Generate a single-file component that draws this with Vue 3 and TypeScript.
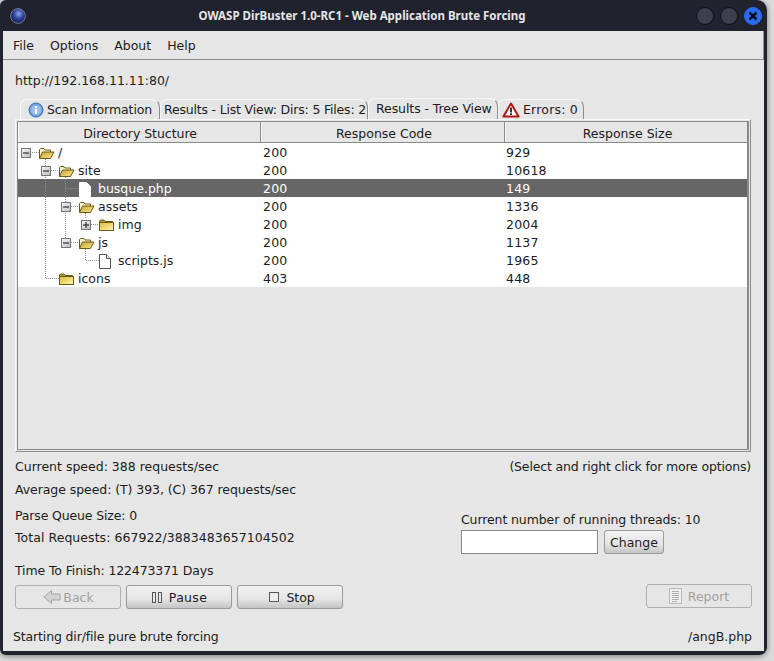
<script setup lang="ts">
interface Row {
  name: string
  code: number
  size: number
  indent: number
  kind: 'open' | 'closed' | 'file'
  toggle?: '+' | '-'
  selected?: boolean
}

const menus: string[] = ['File', 'Options', 'About', 'Help']

const rows: Row[] = [
  { name: '/', code: 200, size: 929, indent: 0, kind: 'open', toggle: '-' },
  { name: 'site', code: 200, size: 10618, indent: 1, kind: 'open', toggle: '-' },
  { name: 'busque.php', code: 200, size: 149, indent: 2, kind: 'file', selected: true },
  { name: 'assets', code: 200, size: 1336, indent: 2, kind: 'open', toggle: '-' },
  { name: 'img', code: 200, size: 2004, indent: 3, kind: 'closed', toggle: '+' },
  { name: 'js', code: 200, size: 1137, indent: 2, kind: 'open', toggle: '-' },
  { name: 'scripts.js', code: 200, size: 1965, indent: 3, kind: 'file' },
  { name: 'icons', code: 403, size: 448, indent: 1, kind: 'closed' },
]
</script>

<template>
  <div class="desktop">
    <div class="window">
      <header class="titlebar">
        <svg class="app-icon" width="16" height="16" viewBox="0 0 16 16">
          <defs>
            <radialGradient id="orb" cx="0.55" cy="0.35" r="0.7">
              <stop offset="0" stop-color="#8fa4e8" />
              <stop offset="0.5" stop-color="#2c3f9c" />
              <stop offset="1" stop-color="#101a4c" />
            </radialGradient>
            <linearGradient id="front" x1="0" y1="0" x2="1" y2="1">
              <stop offset="0" stop-color="#c9a52e" />
              <stop offset="1" stop-color="#f6e68f" />
            </linearGradient>
            <linearGradient id="closed" x1="0" y1="0" x2="1" y2="1">
              <stop offset="0" stop-color="#d9b93d" />
              <stop offset="0.6" stop-color="#f2df7c" />
              <stop offset="1" stop-color="#fbf4c4" />
            </linearGradient>
            <linearGradient id="toggle" x1="0" y1="0" x2="1" y2="1">
              <stop offset="0" stop-color="#fafafa" />
              <stop offset="1" stop-color="#b9b9b9" />
            </linearGradient>
          </defs>
          <circle cx="8" cy="8" r="7.4" fill="url(#orb)" stroke="#8a8f98" stroke-width="0.8" />
        </svg>
        <div class="title">OWASP DirBuster 1.0-RC1 - Web Application Brute Forcing</div>
        <div class="win-buttons">
          <span class="win-btn"></span>
          <span class="win-btn"></span>
          <span class="win-btn close">
            <svg width="10" height="10" viewBox="0 0 10 10">
              <path d="M1.5 1.5 8.5 8.5M8.5 1.5 1.5 8.5" stroke="#0a0f1e" stroke-width="2.6" />
            </svg>
          </span>
        </div>
      </header>

      <div class="client">
        <nav class="menubar">
          <span v-for="m in menus" :key="m" class="menu">{{ m }}</span>
        </nav>

        <div class="url">http://192.168.11.11:80/</div>

        <div class="tabs">
          <div class="tab t1">
            <svg width="16" height="16" viewBox="0 0 16 16">
              <circle cx="8" cy="8" r="7" fill="#6f9fdc" stroke="#3d6cb0" />
              <circle cx="8" cy="8" r="5" fill="#9cc0ea" />
              <rect x="7" y="7" width="2" height="5" fill="#fff" />
              <rect x="7" y="4" width="2" height="2" fill="#fff" />
            </svg>
            <span>Scan Information</span>
          </div>
          <div class="tab t2"><span>Results - List View: Dirs: 5 Files: 2</span></div>
          <div class="tab t3 active"><span>Results - Tree View</span></div>
          <div class="tab t4">
            <svg width="18" height="16" viewBox="0 0 18 16">
              <path d="M9 1.5 16.6 14.5H1.4Z" fill="#fff" stroke="#b01515" stroke-width="2" stroke-linejoin="round" />
              <rect x="8.1" y="5.5" width="1.8" height="5" fill="#222" />
              <rect x="8.1" y="11.2" width="1.8" height="1.8" fill="#222" />
            </svg>
            <span>Errors: 0</span>
          </div>
        </div>

        <section class="panel">
          <div class="table">
            <div class="thead">
              <div class="th first">Directory Stucture</div>
              <div class="th shifted">Response Code</div>
              <div class="th shifted last">Response Size</div>
            </div>
            <div class="tbody">
              <svg class="guides" width="130" height="144" viewBox="0 0 130 144">
                <g stroke="#8c8c8c" stroke-dasharray="1 1" fill="none">
                  <path d="M8 9.5H21" />
                  <path d="M27.5 14V135.5H41" />
                  <path d="M33 27.5H41" />
                  <path d="M47.5 32V99" />
                  <path d="M47.5 45.5H62" />
                  <path d="M53 63.5H61" />
                  <path d="M53 99.5H61" />
                  <path d="M67.5 68V76" />
                  <path d="M73 81.5H81" />
                  <path d="M67.5 104V117.5H81" />
                </g>
              </svg>
              <div v-for="r in rows" :key="r.name" class="tr" :class="{ selected: r.selected }">
                <div class="td tree" :class="'lvl' + r.indent">
                  <span class="toggle" :class="{ hidden: !r.toggle }">
                    <svg width="10" height="10" viewBox="0 0 10 10">
                      <rect x="0.5" y="0.5" width="9" height="9" fill="url(#toggle)" stroke="#777" />
                      <path v-if="r.toggle" d="M2 5H8" stroke="#111" />
                      <path v-if="r.toggle === '+'" d="M5 2V8" stroke="#111" />
                    </svg>
                  </span>
                  <span class="node" :class="r.kind">
                    <svg v-if="r.kind === 'open'" width="17" height="13" viewBox="0 0 17 13">
                      <path d="M1.5 11.5V2.5L2.5 1.5H6L7 3H12.5V5" fill="#fbf5cf" stroke="#6b5a17" />
                      <path d="M1.5 11.5 4.5 5H16L12.5 11.5Z" fill="url(#front)" stroke="#6b5a17" />
                    </svg>
                    <svg v-else-if="r.kind === 'closed'" width="17" height="13" viewBox="0 0 17 13">
                      <path d="M1.5 3V2L2.5 1H6L7 2.5H14.5V3.5H1.5Z" fill="#b9982a" stroke="#6b5a17" />
                      <rect x="1.5" y="3.5" width="14" height="8" fill="url(#closed)" stroke="#6b5a17" />
                    </svg>
                    <svg v-else width="12" height="15" viewBox="0 0 12 15">
                      <path d="M0.5 0.5H7.5L11.5 4.5V14.5H0.5Z" fill="#fff" stroke="#555" />
                      <path d="M7.5 0.5V4.5H11.5" fill="#eee" stroke="#555" />
                    </svg>
                  </span>
                  <span class="name">{{ r.name }}</span>
                </div>
                <div class="td num code">{{ r.code }}</div>
                <div class="td num size">{{ r.size }}</div>
              </div>
            </div>
          </div>
        </section>

        <div class="speed-row">
          <span>Current speed: 388 requests/sec</span>
          <span class="hint">(Select and right click for more options)</span>
        </div>
        <div class="avg">Average speed: (T) 393, (C) 367 requests/sec</div>

        <div class="info-grid">
          <div class="left-info">
            <div class="parse">Parse Queue Size: 0</div>
            <div class="total">Total Requests: 667922/3883483657104502</div>
            <div class="finish">Time To Finish: 122473371 Days</div>
          </div>
          <div class="threads">
            <div class="thread-label">Current number of running threads: 10</div>
            <div class="thread-ctrl">
              <input class="thread-input" type="text" />
              <button class="btn change">Change</button>
            </div>
          </div>
        </div>

        <div class="actions">
          <button class="btn act disabled back">
            <svg width="18" height="16" viewBox="0 0 18 16">
              <path d="M1 8 8.5 1.5V5H17V11H8.5V14.5Z" fill="#d4d4d4" stroke="#a2a2a2" />
            </svg>
            <span>Back</span>
          </button>
          <button class="btn act">
            <svg width="12" height="13" viewBox="0 0 12 13">
              <rect x="1.5" y="1.5" width="3" height="10" fill="#e9e9e9" stroke="#555" />
              <rect x="7.5" y="1.5" width="3" height="10" fill="#e9e9e9" stroke="#555" />
            </svg>
            <span class="wide">Pause</span>
          </button>
          <button class="btn act stop">
            <svg width="12" height="12" viewBox="0 0 12 12">
              <rect x="1.5" y="1.5" width="9" height="9" fill="#ececec" stroke="#555" />
            </svg>
            <span>Stop</span>
          </button>
          <button class="btn act disabled report">
            <svg width="13" height="16" viewBox="0 0 13 16">
              <rect x="0.5" y="0.5" width="12" height="15" fill="#efefef" stroke="#b8b8b8" />
              <path d="M3 3.5H10M3 5.5H10M3 7.5H10M3 9.5H10M3 11.5H10M3 13.5H8" stroke="#b0b0b0" />
            </svg>
            <span>Report</span>
          </button>
        </div>

        <footer class="status">
          <span class="status-left">Starting dir/file pure brute forcing</span>
          <span>/angB.php</span>
        </footer>
      </div>
    </div>
  </div>
</template>

<style>
html, body { margin: 0; background: #d8d8d8; }
</style>

<style scoped>
.desktop {
  width: 774px;
  height: 661px;
  overflow: hidden;
  background: #dcdcdc;
  font-family: "DejaVu Sans", sans-serif;
  font-size: 12.5px;
  color: #1c1c1c;
}
.window {
  width: 767px;
  height: 655px;
  background: #20232e;
  border-radius: 6px 10px 8px 6px;
  box-sizing: border-box;
  padding: 0 3px 4px;
  display: flex;
  flex-direction: column;
  box-shadow: 0 1px 6px rgba(0, 0, 0, 0.45);
}
.titlebar {
  height: 31px;
  flex: none;
  display: flex;
  align-items: center;
  position: relative;
}
.app-icon { margin-left: 7px; margin-top: 1px; }
.title {
  position: absolute;
  left: 0;
  right: 0;
  top: 7px;
  text-align: center;
  font-family: "Noto Sans", sans-serif;
  font-weight: 700;
  font-size: 11.5px;
  line-height: 17px;
  color: #e6e6e6;
  padding-right: 43px;
}
.win-buttons {
  position: absolute;
  right: 2px;
  top: 7px;
  display: flex;
  gap: 6px;
}
.win-btn {
  width: 18px;
  height: 18px;
  border-radius: 50%;
  background: #3b3f4e;
  box-sizing: border-box;
  border: 1px solid #0e1016;
  display: flex;
  align-items: center;
  justify-content: center;
}
.win-btn.close { background: #2a6cf0; border-color: #2a6cf0; }
.client {
  flex: 1;
  width: 761px;
  background: #e6e6e6;
  display: flex;
  flex-direction: column;
  box-sizing: border-box;
  min-height: 0;
}
.menubar {
  height: 29px;
  flex: none;
  box-sizing: border-box;
  border-bottom: 1px solid #8d8d8d;
  border-right: 1px solid #8d8d8d;
  display: flex;
  align-items: center;
  padding: 1px 0 0 10px;
  gap: 16px;
}
.url { margin: 12px 0 0 12px; line-height: 18px; }
.tabs {
  display: flex;
  margin: 9px 0 0 14px;
  height: 20px;
  flex: none;
  align-items: flex-end;
}
.tab {
  height: 20px;
  box-sizing: border-box;
  display: flex;
  align-items: center;
  gap: 3px;
  line-height: 18px;
  white-space: nowrap;
  border-top: 1px solid #f6f6f6;
  border-left: 1px solid #f6f6f6;
  border-right: 1px solid #8e8e8e;
  border-radius: 7px 8px 0 0;
}
.t1 { width: 140px; padding-left: 7px; margin-left: 3px; letter-spacing: -0.1px; }
.t2 { width: 208px; padding-left: 3px; letter-spacing: -0.19px; }
.t3 { width: 130px; padding-left: 7px; height: 21px; padding-bottom: 1px; letter-spacing: -0.08px; }
.t4 { width: 86px; padding-left: 3px; letter-spacing: 0.2px; }
.panel {
  margin: 0 0 0 12px;
  width: 736px;
  height: 333px;
  box-sizing: border-box;
  border-top: 1px solid #f8f8f8;
  border-left: 1px solid #f8f8f8;
  border-right: 1px solid #8e8e8e;
  border-bottom: 1px solid #8e8e8e;
  padding: 1px;
  flex: none;
}
.table {
  height: 100%;
  box-sizing: border-box;
  border: 1px solid #8a8a8a;
  border-right: 2px solid #8a8a8a;
  background: #e6e6e6;
}
.thead {
  display: grid;
  grid-template-columns: 243px 244px 1fr;
  height: 20px;
  border-bottom: 1px solid #8a8a8a;
}
.th {
  text-align: center;
  line-height: 23px;
  height: 20px;
  border-right: 1px solid #8a8a8a;
  border-left: 1px solid #f8f8f8;
  box-sizing: border-box;
}
.th.first { padding-left: 1px; letter-spacing: -0.05px; }
.th.shifted { padding-left: 2px; }
.th.last { border-right: none; }
.tbody { position: relative; }
.guides { position: absolute; left: 0; top: 0; pointer-events: none; z-index: 1; }
.tr {
  display: grid;
  grid-template-columns: 243px 243px 1fr;
  height: 18px;
  line-height: 18px;
  background: #fff;
}
.tr.selected { background: #666; color: #fff; }
.td { white-space: nowrap; }
.tree { display: flex; align-items: center; position: relative; z-index: 2; }
.num { padding-left: 1px; line-height: 20px; letter-spacing: 0.2px; }
.size { padding-left: 2px; }
.code { padding-left: 2px; }
.lvl0 { padding-left: 3px; }
.lvl1 { padding-left: 23px; }
.lvl2 { padding-left: 43px; }
.lvl3 { padding-left: 63px; }
.toggle { width: 10px; height: 10px; display: block; flex: none; margin-right: 7px; }
.toggle svg { display: block; }
.toggle.hidden svg { display: none; }
.node { width: 17px; height: 15px; display: flex; align-items: center; justify-content: center; flex: none; margin-right: 3px; }
.node.file { justify-content: flex-end; padding-right: 4px; box-sizing: border-box; }
.selected .file svg path { stroke: #fff; fill: #fff; }
.speed-row {
  display: flex;
  justify-content: space-between;
  margin: 6px 13px 0 12px;
  line-height: 18px;
}
.hint { letter-spacing: -0.17px; }
.avg { margin: 5px 0 0 12px; line-height: 18px; letter-spacing: -0.07px; }
.info-grid {
  display: flex;
  justify-content: space-between;
  margin: 8px 0 0 12px;
  height: 78px;
  flex: none;
}
.parse { line-height: 18px; letter-spacing: -0.15px; }
.total { line-height: 18px; margin-top: 4px; letter-spacing: 0.05px; }
.finish { line-height: 18px; margin-top: 15px; letter-spacing: -0.13px; }
.threads { width: 303px; margin-top: 4px; }
.thread-label { line-height: 18px; letter-spacing: -0.11px; }
.thread-ctrl { display: flex; gap: 6px; margin-top: 1px; }
.thread-input {
  width: 137px;
  height: 24px;
  box-sizing: border-box;
  border: 1px solid #8a8a8a;
  background: #fff;
  padding: 0;
  outline: none;
}
.btn {
  font: inherit;
  color: #1c1c1c;
  border: 1px solid #9a9a9a;
  border-radius: 3px;
  background: linear-gradient(#f2f2f2 0%, #e4e4e4 60%, #c4c4c4 100%);
  padding: 0;
  display: flex;
  align-items: center;
  justify-content: center;
  gap: 6px;
}
.change { width: 60px; height: 24px; }
.actions {
  display: flex;
  gap: 5px;
  margin: 0 12px 0 12px;
  height: 25px;
  flex: none;
}
.act { width: 106px; height: 24px; }
.back { gap: 2px; padding-left: 1px; }
.wide { letter-spacing: 0.3px; }
.stop { padding-left: 3px; letter-spacing: -0.05px; }
.disabled { background: #e6e6e6; color: #a0a0a0; border-color: #b0b0b0; }
.report { margin-left: auto; margin-top: -1px; }
.status {
  display: flex;
  justify-content: space-between;
  margin: 18px 12px 0 10px;
  line-height: 18px;
}
.status-left { letter-spacing: -0.14px; }
</style>
